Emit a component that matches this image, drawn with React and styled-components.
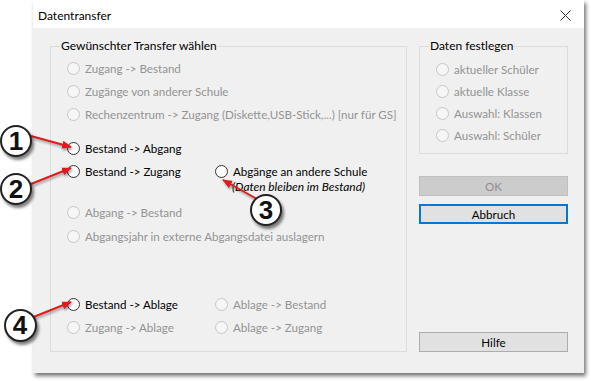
import React from "react";
import styled, { createGlobalStyle } from "styled-components";

const Global = createGlobalStyle`
  html, body { margin: 0; padding: 0; background: #ffffff; }
  body { font-family: Lato, "Liberation Sans", Arial, sans-serif; font-size: 12px; color: #000; }
`;

const Page = styled.div`
  position: relative;
  width: 591px;
  height: 381px;
  overflow: hidden;
`;

const Window = styled.div`
  margin-left: 33px;
  width: 551px;
  height: 373px;
  display: flex;
  flex-direction: column;
  background: #f0f0f0;
  box-shadow: 2px 3px 4px rgba(0, 0, 0, 0.55);
`;

const TitleBar = styled.div`
  height: 28px;
  flex: none;
  background: #ffffff;
  display: flex;
  align-items: center;
  justify-content: space-between;
  padding: 2px 13px 0 5px;
  box-sizing: border-box;
  font-size: 12px;
`;

const Client = styled.div`
  flex: 1;
  display: flex;
  gap: 12px;
  padding: 11px 16px 21px 17px;
`;

const Group = styled.fieldset`
  margin: 0;
  padding: 0 0 ${(p) => p.$pb || 0}px 0;
  border: 1px solid #dcdcdc;
  width: ${(p) => p.$w}px;
  box-sizing: border-box;
  min-width: 0;
  ${(p) => (p.$h ? `height: ${p.$h}px;` : "")}
`;

const Legend = styled.legend`
  margin-left: 9px;
  padding: 0 1px;
  font-size: 12px;
  line-height: 14px;
  color: #000;
`;

const List = styled.div`
  display: flex;
  flex-direction: column;
  padding: ${(p) => p.$pt}px 0 0 16px;
  font-size: 11.6px;
`;

const Row = styled.div`
  display: flex;
  align-items: flex-start;
  margin-top: ${(p) => p.$mt || 0}px;
`;

const Cell = styled.div`
  display: flex;
  flex-direction: column;
  width: ${(p) => (p.$w ? `${p.$w}px` : "auto")};
  flex: none;
`;

const Option = styled.label`
  display: flex;
  align-items: center;
  gap: 5px;
  height: ${(p) => p.$h}px;
  white-space: nowrap;
  color: ${(p) => (p.$disabled ? "#939393" : "#000")};
`;

const Dot = styled.span`
  width: 13px;
  height: 13px;
  box-sizing: border-box;
  border-radius: 50%;
  flex: none;
  border: 1px solid ${(p) => (p.$disabled ? "#c6c6c6" : "#333333")};
  background: ${(p) => (p.$disabled ? "#f6f6f6" : "#ffffff")};
`;

const Caption = styled.div`
  margin: -3px 0 0 17px;
  font-style: italic;
  font-size: 11.9px;
  line-height: 13px;
  white-space: nowrap;
`;

const Side = styled.div`
  width: 149px;
  display: flex;
  flex-direction: column;
`;

const Button = styled.div`
  height: 20px;
  box-sizing: border-box;
  display: flex;
  align-items: center;
  justify-content: center;
  margin-top: ${(p) => (p.$auto ? "auto" : `${p.$mt || 0}px`)};
  background: ${(p) => (p.$disabled ? "#cccccc" : "#e1e1e1")};
  border: ${(p) =>
    p.$focus ? "2px solid #0078d7" : p.$disabled ? "1px solid #bfbfbf" : "1px solid #adadad"};
  color: ${(p) => (p.$disabled ? "#8d8d8d" : "#000")};
  font-size: 11.6px;
`;

const Callout = styled.div`
  position: absolute;
  left: ${(p) => p.$x - p.$d / 2}px;
  top: ${(p) => p.$y - p.$d / 2}px;
  width: ${(p) => p.$d}px;
  height: ${(p) => p.$d}px;
  box-sizing: border-box;
  border-radius: 50%;
  background: #ffffff;
  border: 2px solid #222222;
  box-shadow: 2px 3px 3px rgba(0, 0, 0, 0.5);
  display: flex;
  align-items: center;
  justify-content: center;
  font-family: "Liberation Sans", Arial, sans-serif;
  font-weight: bold;
  font-size: 26px;
  color: #111;
`;

const Arrows = styled.svg`
  position: absolute;
  left: 0;
  top: 0;
  pointer-events: none;
  filter: drop-shadow(1px 2px 1px rgba(0, 0, 0, 0.35));
`;

const Opt = ({ label, disabled, h = 23 }) => (
  <Option $disabled={disabled} $h={h}>
    <Dot $disabled={disabled} />
    {label}
  </Option>
);

const arrows = [
  [31, 136, 71, 147],
  [31, 184, 71, 168],
  [257, 199, 223, 180],
  [31, 318, 71, 302],
];

const callouts = [
  { n: "1", x: 16, y: 141, d: 32 },
  { n: "2", x: 16, y: 189, d: 32 },
  { n: "3", x: 266, y: 210, d: 32 },
  { n: "4", x: 20, y: 325, d: 33 },
];

export default function App() {
  return (
    <Page>
      <Global />
      <Window>
        <TitleBar>
          <span>Datentransfer</span>
          <svg width="11" height="11" viewBox="0 0 11 11">
            <path d="M0.5 0.5 L10.5 10.5 M10.5 0.5 L0.5 10.5" stroke="#333" strokeWidth="1" />
          </svg>
        </TitleBar>
        <Client>
          <Group $w={357} $h={313}>
            <Legend>Gewünschter Transfer wählen</Legend>
            <List $pt={4}>
              <Opt disabled label="Zugang -> Bestand" />
              <Opt disabled label="Zugänge von anderer Schule" />
              <Opt disabled label="Rechenzentrum -> Zugang (Diskette,USB-Stick,...) [nur für GS]" />
              <Row $mt={11}>
                <Opt label="Bestand -> Abgang" />
              </Row>
              <Row>
                <Cell $w={148}>
                  <Opt label="Bestand -> Zugang" />
                </Cell>
                <Cell>
                  <Opt label="Abgänge an andere Schule" />
                  <Caption>(Daten bleiben im Bestand)</Caption>
                </Cell>
              </Row>
              <Row $mt={8}>
                <Opt disabled label="Abgang -> Bestand" />
              </Row>
              <Row $mt={1}>
                <Opt disabled label="Abgangsjahr in externe Abgangsdatei auslagern" />
              </Row>
              <Row $mt={45}>
                <Cell $w={148}>
                  <Opt label="Bestand -> Ablage" />
                </Cell>
                <Cell>
                  <Opt disabled label="Ablage -> Bestand" />
                </Cell>
              </Row>
              <Row>
                <Cell $w={148}>
                  <Opt disabled label="Zugang -> Ablage" />
                </Cell>
                <Cell>
                  <Opt disabled label="Ablage -> Zugang" />
                </Cell>
              </Row>
            </List>
          </Group>
          <Side>
            <Group $w={149} $pb={7}>
              <Legend>Daten festlegen</Legend>
              <List $pt={5}>
                <Opt h={22} disabled label="aktueller Schüler" />
                <Opt h={22} disabled label="aktuelle Klasse" />
                <Opt h={22} disabled label="Auswahl: Klassen" />
                <Opt h={22} disabled label="Auswahl: Schüler" />
              </List>
            </Group>
            <Button $disabled $mt={22}>OK</Button>
            <Button $focus $mt={8}>Abbruch</Button>
            <Button $auto>Hilfe</Button>
          </Side>
        </Client>
      </Window>
      <Arrows width="591" height="381" viewBox="0 0 591 381">
        <defs>
          <marker id="ah" markerWidth="10" markerHeight="8" refX="9" refY="4" orient="auto" markerUnits="userSpaceOnUse">
            <path d="M0 0 L10 4 L0 8 Z" fill="#e01b1b" />
          </marker>
        </defs>
        {arrows.map(([x1, y1, x2, y2], i) => (
          <line key={i} x1={x1} y1={y1} x2={x2} y2={y2} stroke="#e01b1b" strokeWidth="2" markerEnd="url(#ah)" />
        ))}
      </Arrows>
      {callouts.map((c) => (
        <Callout key={c.n} $x={c.x} $y={c.y} $d={c.d}>
          {c.n}
        </Callout>
      ))}
    </Page>
  );
}
